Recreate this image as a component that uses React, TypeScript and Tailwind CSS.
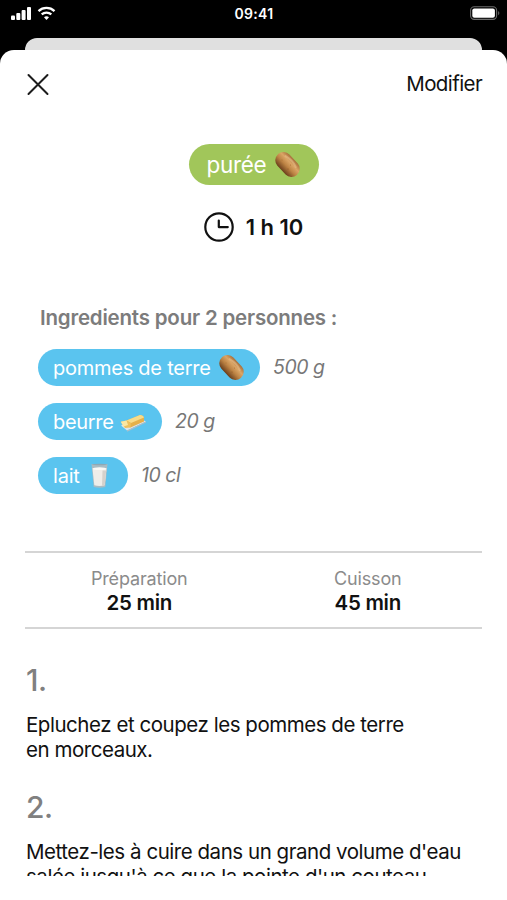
import type { ReactNode } from "react";

const ingredients = [
  { name: "pommes de terre", quantity: "500 g", icon: <PotatoIcon size={27} />, width: "w-[222px]", text: "tracking-[-0.25px]" },
  { name: "beurre", quantity: "20 g", icon: <ButterIcon />, width: "w-[124px]", text: "tracking-[-0.3px]" },
  { name: "lait", quantity: "10 cl", icon: <MilkIcon />, width: "w-[90px]", text: "tracking-[-0.2px]" },
];

function PotatoIcon({ size }: { size: number }) {
  return (
    <svg width={size} height={size} viewBox="0 0 27 27" className="shrink-0">
      <defs>
        <linearGradient id="potato" x1="0" y1="0" x2="0" y2="1">
          <stop offset="0" stopColor="#a8703c" />
          <stop offset="0.3" stopColor="#dba566" />
          <stop offset="0.6" stopColor="#bd8344" />
          <stop offset="1" stopColor="#6b3e1b" />
        </linearGradient>
      </defs>
      <g transform="rotate(47 13.500 13.500)">
        <rect x="-0.500" y="5.300" width="28" height="16.400" rx="8" fill="url(#potato)" />
        <path d="M6 9.200c5-1.600 11-1.600 15 0" stroke="#f0c894" strokeWidth="2" strokeLinecap="round" opacity="0.450" fill="none" />
      </g>
      <circle cx="8" cy="9" r=".5" fill="#a86c36" />
      <circle cx="16.500" cy="14" r=".5" fill="#a86c36" />
      <circle cx="14" cy="18" r=".5" fill="#8a5225" />
    </svg>
  );
}

function ButterIcon() {
  return (
    <svg width="27" height="27" viewBox="0 0 27 27" className="shrink-0">
      <path d="M1 17.500 20 10.500 26 13.500 7 22.500Z" fill="#dfe5e8" />
      <path d="M7 22.500 26 13.500v1L7.200 23.700Z" fill="#aebdc6" />
      <path d="M6.500 12.500 20 7c2 0 3.500 1 4 2.500v4L10.500 19.500 7.500 18.500Z" fill="#e5b04a" />
      <path d="M6.500 12.500 20 7c2 0 3.500 1 4 2.500L11 15Z" fill="#f8dc8a" />
      <path d="M.8 13.800 6.500 12.500 10.800 15 10.500 19.500 5 20Z" fill="#eec05d" />
      <path d="M.8 13.800 6.500 12.500 8 17 3.500 18.500Z" fill="#fbe7a3" />
    </svg>
  );
}

function MilkIcon() {
  return (
    <svg width="27" height="27" viewBox="0 0 27 27" className="shrink-0">
      <path d="M5.500 2h16l-2.200 23q-5.800 1.600-11.600 0Z" fill="#a9bcc4" />
      <path d="M6.500 6.500h14L18.700 23.300q-5.200 1.200-10.400 0Z" fill="#efede9" />
      <ellipse cx="13.500" cy="6.700" rx="7" ry="1.400" fill="#fbfaf7" />
      <path d="M16.500 8.500h3.700l-1.500 14.800-2.700.4Z" fill="#d5d1cc" />
      <ellipse cx="13.500" cy="2.500" rx="7.700" ry=".8" fill="#8fa8b4" />
    </svg>
  );
}

function StatusBar() {
  return (
    <div className="grid h-[38px] grid-cols-3 items-start px-[7px] pt-[5px] text-white">
      <div className="flex gap-[6px] pt-px pl-[4px]">
        <svg width="20" height="15" viewBox="0 0 20 15" fill="white">
          <rect x="0" y="9.500" width="4" height="4.500" rx="1" />
          <rect x="5.300" y="7" width="4" height="7" rx="1" />
          <rect x="10.600" y="4" width="4" height="10" rx="1" />
          <rect x="16" y="1" width="4" height="13" rx="1" />
        </svg>
        <svg width="19" height="14" viewBox="0 0 18 14" fill="none" stroke="white" strokeWidth="2.300">
          <path d="M1 5.100C5.500.9 12.500.9 17 5.100" />
          <path d="M4.200 8.400c2.700-2.400 6.900-2.400 9.600 0" />
          <path d="M6.500 11.200c1.400-1.300 3.600-1.300 5 0L9 13.900Z" fill="white" stroke="none" />
        </svg>
      </div>
      <p className="pl-px text-center text-[14px] leading-[18px] font-semibold tracking-[0.35px]">09:41</p>
      <div className="flex justify-end pt-px">
        <svg width="30" height="14" viewBox="0 0 30 14">
          <rect x=".6" y=".8" width="26" height="12.600" rx="3.600" fill="none" stroke="#6b6b6b" strokeWidth="1.100" />
          <rect x="2.300" y="2.500" width="22.600" height="9.200" rx="2" fill="white" />
          <path d="M28.200 5v4.200c1.500-.8 1.500-3.400 0-4.200Z" fill="#6b6b6b" />
        </svg>
      </div>
    </div>
  );
}

function Duration({ label, value }: { label: string; value: string }) {
  return (
    <div className="flex flex-1 flex-col items-center">
      <p className="text-[18px] leading-[25px] tracking-[-0.15px] text-[#8b8b8b]">{label}</p>
      <p className="text-[20.500px] leading-[24px] font-semibold tracking-[-0.3px]">{value}</p>
    </div>
  );
}

function Step({ number, children }: { number: string; children: ReactNode }) {
  return (
    <li className="h-[127px]">
      <p className="text-[30px] leading-[36px] font-medium tracking-[-0.5px] text-[#808080]">{number}</p>
      <p className="pt-[15px] text-[20.500px] leading-[24.500px] tracking-[-0.460px] whitespace-nowrap">{children}</p>
    </li>
  );
}

export default function App() {
  return (
    <div className="flex h-[900px] w-[507px] flex-col overflow-hidden bg-black font-['Inter',sans-serif] text-[#111]">
      <StatusBar />
      <div className="mx-[25px] h-3 shrink-0 rounded-t-[12px] bg-[#e0e0e0]" />
      <main className="flex min-h-0 flex-1 flex-col rounded-t-[14px] bg-white px-[25px] pb-[24px]">
        <header className="flex h-[69px] shrink-0 items-center justify-between">
          <svg width="26" height="26" viewBox="0 0 26 26" fill="none" stroke="#1c1c1c" strokeWidth="2" strokeLinecap="round">
            <path d="m3.500 3 19 19M22.500 3l-19 19" />
          </svg>
          <button className="text-[20.500px] tracking-[-0.600px]">Modifier</button>
        </header>

        <div className="flex shrink-0 flex-col items-center pt-[25px]">
          <div className="flex h-[41px] w-[130px] items-center justify-between rounded-full bg-[#a1c65a] pr-[18px] pl-[18px] text-white">
            <h1 className="pt-px text-[22.500px] leading-none tracking-[-0.300px]">purée</h1>
            <PotatoIcon size={27} />
          </div>
          <div className="mt-[26px] flex h-[32px] items-center gap-[12px]">
            <svg width="30" height="30" viewBox="0 0 30 30" fill="none" stroke="#111" strokeWidth="2.200">
              <circle cx="15" cy="15" r="13.700" />
              <path d="M14.800 8.500v6.600h9" strokeLinejoin="round" strokeLinecap="round" />
            </svg>
            <p className="text-[22px] font-semibold tracking-[-0.050px]">1 h 10</p>
          </div>
        </div>

        <section className="shrink-0 pt-[61px]">
          <h2 className="pt-px pl-[15px] text-[20.500px] leading-[25px] font-semibold tracking-[-0.200px] text-[#7c7c7c]">
            Ingredients pour 2 personnes :
          </h2>
          <ul className="flex flex-col gap-[17px] pt-[19px] pl-[13px]">
            {ingredients.map((item) => (
              <li key={item.name} className="flex h-[37px] items-center gap-[13px] whitespace-nowrap">
                <div className={`${item.width} flex h-full items-center justify-between rounded-full bg-[#5ac4ef] pr-[15px] pl-[15px] text-white`}>
                  <span className={`pt-px text-[20px] leading-[25px] ${item.text}`}>{item.name}</span>
                  {item.icon}
                </div>
                <span className="pt-px text-[19.500px] tracking-[-0.450px] text-[#777] italic">{item.quantity}</span>
              </li>
            ))}
          </ul>
        </section>

        <section className="mt-[57px] flex h-[78px] shrink-0 border-y-2 border-[#d5d5d5] pt-[13px]">
          <Duration label="Préparation" value="25 min" />
          <Duration label="Cuisson" value="45 min" />
        </section>

        <ol className="mt-[33px] min-h-0 flex-1 overflow-hidden pl-px">
          <Step number="1.">
            Epluchez et coupez les pommes de terre
            <br />
            en morceaux.
          </Step>
          <Step number="2.">
            Mettez-les à cuire dans un grand volume d'eau
            <br />
            salée jusqu'à ce que la pointe d'un couteau
          </Step>
        </ol>
      </main>
    </div>
  );
}
